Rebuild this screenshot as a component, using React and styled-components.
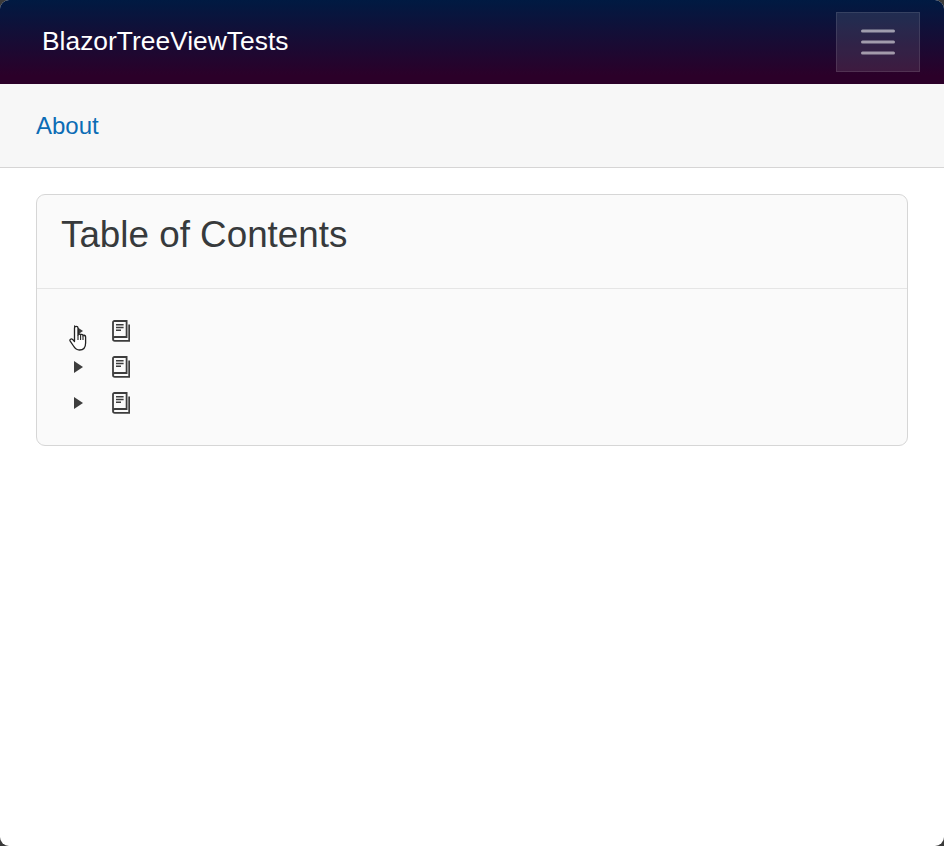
import React from "react";
import styled, { createGlobalStyle } from "styled-components";

const Global = createGlobalStyle`
  html, body { margin: 0; padding: 0; background: #3a3a3a; height: 100%; overflow: hidden; }
  body { font-family: "Liberation Sans", Arial, sans-serif; }
  * { box-sizing: border-box; }
`;

const Page = styled.div`
  width: 944px;
  height: 846px;
  background: #fff;
  border-radius: 9px;
  overflow: hidden;
`;

const TopBar = styled.header`
  height: 84px;
  padding: 12px 24px 12px 42px;
  display: flex;
  align-items: center;
  justify-content: space-between;
  background: linear-gradient(180deg, #001a42 0%, #2b0029 90%);
`;

const Brand = styled.a`
  color: #fff;
  font-size: 26.4px;
  line-height: 36px;
  margin-top: -2px;
`;

const Toggler = styled.button`
  width: 84px;
  height: 60px;
  padding: 0;
  display: flex;
  align-items: center;
  justify-content: center;
  background: rgba(255, 255, 255, 0.1);
  border: 1px solid rgba(255, 255, 255, 0.1);
  border-radius: 0;
`;

const SubNav = styled.nav`
  height: 84px;
  padding: 0 36px;
  display: flex;
  align-items: center;
  background: #f7f7f7;
  border-bottom: 1px solid #d6d5d5;
`;

const NavLink = styled.a`
  color: #0b6cb5;
  font-size: 24px;
  line-height: 36px;
`;

const Main = styled.main`
  padding: 26px 36px 0;
`;

const Card = styled.section`
  height: 252px;
  background: #fafafa;
  border: 1px solid #d6d6d6;
  border-radius: 9px;
`;

const CardHeader = styled.div`
  height: 94px;
  padding: 12px 24px;
  border-bottom: 1px solid #e5e5e5;
`;

const Title = styled.h3`
  margin: 0;
  color: #373a3c;
  font-size: 36.8px;
  font-weight: 400;
  line-height: 55px;
`;

const CardBody = styled.div`
  position: relative;
  padding: 24px 37px 0;
`;

const Row = styled.div`
  height: 36px;
  display: flex;
  align-items: center;
  gap: 29px;
`;

const Cursor = styled.svg`
  position: absolute;
  left: 32px;
  top: 36px;
`;

const Menu = () => (
  <svg width="36" height="28" viewBox="0 0 36 28">
    <g stroke="rgba(255,255,255,0.55)" strokeWidth="3" strokeLinecap="round">
      <line x1="2.5" y1="3" x2="33.5" y2="3" />
      <line x1="2.5" y1="14" x2="33.5" y2="14" />
      <line x1="2.5" y1="25" x2="33.5" y2="25" />
    </g>
  </svg>
);

const Arrow = () => (
  <svg width="9" height="12" viewBox="0 0 9 12">
    <path d="M0 0L9 6L0 12Z" fill="#3d3d3d" />
  </svg>
);

const Book = () => (
  <svg width="18" height="22" viewBox="0 0 18 22" fill="none" stroke="#3d3d3d">
    <path d="M1 18.5V2.5C1 1.6 1.6 1 2.5 1H14.6V17H2.8C1.6 17 1 18 1 19C1 20 1.6 20.9 2.8 20.9H17.2V4.5" strokeWidth="1.8" />
    <path d="M4 4.8H11.6M4 7.5H11.6M4 10.2H9" strokeWidth="1.5" />
  </svg>
);

const Hand = () => (
  <Cursor width="19" height="26" viewBox="0 0 19 26">
    <path
      d="M5.5 13V3C5.5 0.8 9 0.8 9 3V10C9 8.6 11.6 8.6 11.6 10.3C11.6 9 14 9 14 10.8C14 9.8 16.6 10 16.6 11.8V18C16.6 22 14.5 25 10.5 25C7.5 25 6 23.5 4.5 21L1.2 16.2C0.2 14.6 2.2 13.2 3.6 14.4L5.5 16.6Z"
      fill="#fff"
      stroke="#222"
      strokeWidth="1.3"
      strokeLinejoin="round"
    />
    <path d="M9 10V15M11.6 10.5V15M14 11V15" stroke="#222" strokeWidth="1.1" />
  </Cursor>
);

export default function App() {
  return (
    <Page>
      <Global />
      <TopBar>
        <Brand>BlazorTreeViewTests</Brand>
        <Toggler aria-label="Toggle navigation">
          <Menu />
        </Toggler>
      </TopBar>
      <SubNav>
        <NavLink>About</NavLink>
      </SubNav>
      <Main>
        <Card>
          <CardHeader>
            <Title>Table of Contents</Title>
          </CardHeader>
          <CardBody>
            {[0, 1, 2].map((i) => (
              <Row key={i}>
                <Arrow />
                <Book />
              </Row>
            ))}
            <Hand />
          </CardBody>
        </Card>
      </Main>
    </Page>
  );
}
